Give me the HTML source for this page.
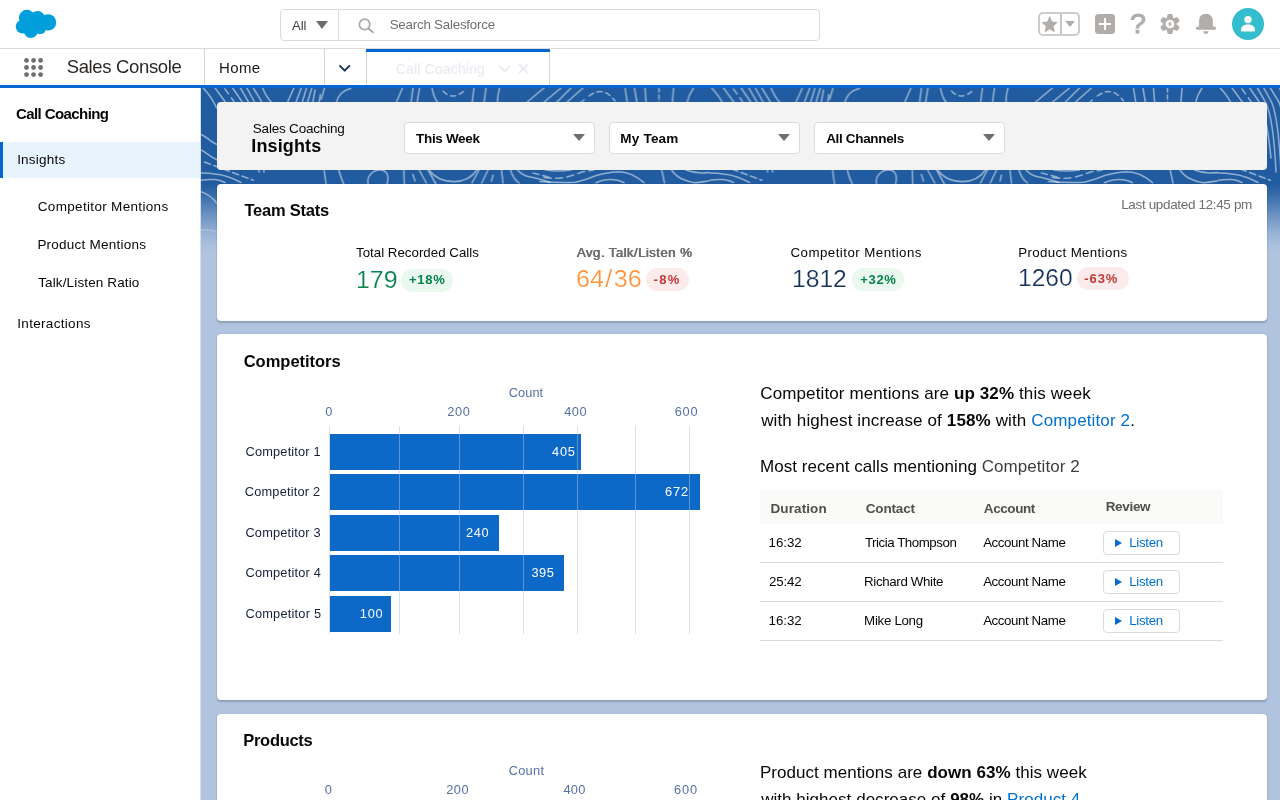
<!DOCTYPE html>
<html lang="en">
<head>
<meta charset="utf-8">
<title>Sales Console - Call Coaching Insights</title>
<style>
*{box-sizing:border-box;margin:0;padding:0}
html,body{width:1280px;height:800px;overflow:hidden;background:#fff}
body{font-family:"Liberation Sans",sans-serif;font-size:13px;color:#080707;position:relative}
.t{position:absolute;white-space:nowrap;line-height:1;display:block}
a{color:#0070d2;text-decoration:none}
svg{position:absolute;overflow:visible}
#app{position:absolute;left:0;top:0;width:1280px;height:800px;overflow:hidden;will-change:transform}

/* ---------- global header ---------- */
#hdr{position:absolute;left:0;top:0;width:1280px;height:49px;background:#fff;border-bottom:1px solid #dddbda}
#search{position:absolute;left:280px;top:9px;width:540px;height:32px;border:1px solid #dddbda;border-radius:4px;background:#fff}
#search .dv{position:absolute;left:57px;top:0;width:1px;height:30px;background:#dddbda}
.tri{position:absolute;width:0;height:0;border-style:solid;border-color:transparent}
#fav{position:absolute;left:1038px;top:12px;width:42px;height:24px;border:2px solid #cecbc9;border-radius:5px}
#fav .dv{position:absolute;left:20px;top:0;width:2px;height:20px;background:#c8c5c3}
#plus{position:absolute;left:1095px;top:14px;width:20px;height:19.5px;border-radius:3.5px;background:#b0adab}
#plus:before{content:"";position:absolute;left:4px;top:8.5px;width:12px;height:2.6px;background:#fff}
#plus:after{content:"";position:absolute;left:8.7px;top:3.8px;width:2.6px;height:12px;background:#fff}
#avatar{position:absolute;left:1232px;top:8px;width:32px;height:32px;border-radius:50%;background:#34becd}

/* ---------- nav ---------- */
#nav{position:absolute;left:0;top:49px;width:1280px;height:36px;background:#fff}
#navline{position:absolute;left:0;top:85px;width:1280px;height:3px;background:#0466cf}
.vs{position:absolute;top:0;width:1px;height:36px;background:#d6d4d2}
#tabtop{position:absolute;left:366px;top:0;width:184px;height:3px;background:#0466cf}

/* ---------- sidebar ---------- */
#side{position:absolute;left:0;top:88px;width:201px;height:712px;background:#fff;border-right:1px solid #d8dde6}
#side .sel{position:absolute;left:0;top:54px;width:200px;height:36px;background:#e7f3fd;border-left:3px solid #0466cf}

/* ---------- main ---------- */
#main{position:absolute;left:201px;top:88px;width:1079px;height:712px;background:#b0c4df;overflow:hidden}
#band{position:absolute;left:0;top:0;width:1079px;height:164px;background:#215ca0}
#fade{position:absolute;left:0;top:96px;width:1079px;height:68px;background:linear-gradient(to bottom,rgba(176,196,223,0) 0,rgba(176,196,223,.2) 20%,rgba(176,196,223,.54) 47%,rgba(176,196,223,.86) 75%,rgba(176,196,223,.97) 94%,#b0c4df 100%)}
.card{position:absolute;left:16px;width:1049.6px;background:#fff;border-radius:4px;box-shadow:0 2px 2px rgba(0,0,0,.18),0 0 1px rgba(0,0,0,.3)}
#filt{background:#f3f3f3;box-shadow:none}
.dd{position:absolute;top:20px;width:191px;height:32px;background:#fff;border:1px solid #dddbda;border-radius:4px}
.pill{position:absolute;height:23px;border-radius:11.5px}
.pg{background:#eaf8ef}
.pr{background:#fbeceb}
.bar{position:absolute;left:112.5px;height:35.7px;background:#0d69c8}
.gl{position:absolute;top:92px;width:1px;height:208px;background:rgba(172,192,220,.5)}
.th{position:absolute;left:543.2px;top:156px;width:462.8px;height:34px;background:#fafaf9}
.rl{position:absolute;left:543.2px;width:462.8px;height:1px;background:#dddbda}
.btn{position:absolute;left:886.2px;width:76.8px;height:23.5px;border:1px solid #dddbda;border-radius:4px;background:#fff}
.btn:before{content:"";position:absolute;left:11px;top:6.5px;width:0;height:0;border-style:solid;border-color:transparent;border-width:4.6px 0 4.6px 7.3px;border-left-color:#066ad4}
.p16{position:absolute;left:544.2px;white-space:nowrap;font-size:17px;line-height:1}
.p16 b{font-weight:700}
</style>
</head>
<body>
<div id="app">

<!-- ================= GLOBAL HEADER ================= -->
<div id="hdr">
  <!-- salesforce cloud logo -->
  <svg style="left:14px;top:8px" width="44" height="32" viewBox="14 8 44 32">
    <g fill="#009edb">
      <circle cx="26.9" cy="17.8" r="8"/><circle cx="37.6" cy="18.4" r="7.4"/><circle cx="48" cy="22.4" r="8.2"/>
      <circle cx="22.6" cy="26.6" r="6.9"/><circle cx="30.8" cy="31" r="6.9"/><circle cx="40" cy="27.6" r="6.4"/>
      <circle cx="33" cy="24" r="7"/>
    </g>
  </svg>
  <div id="search">
    <div class="dv"></div>
  </div>
  <div class="tri" style="left:316.4px;top:21px;border-width:8.4px 6.2px 0 6.2px;border-top-color:#706e6b"></div>
  <!-- magnifier -->
  <svg style="left:357px;top:17px" width="18" height="17" viewBox="357 17 18 17">
    <circle cx="364.6" cy="24.4" r="5.2" fill="none" stroke="#aca8a4" stroke-width="1.7"/>
    <path d="M368.4 28.4 L373 32.2" stroke="#aca8a4" stroke-width="1.9" stroke-linecap="round"/>
  </svg>
  <span class="t" style="left:291.97px;top:19.00px;font-size:13px;color:#3e3e3c;letter-spacing:0.024px">All</span>
    <span class="t" style="left:389.70px;top:18.00px;font-size:13.3px;color:#706e6b;letter-spacing:-0.203px">Search Salesforce</span>
  <!-- favourites -->
  <div id="fav"><div class="dv"></div></div>
  <svg style="left:1041.3px;top:15.2px" width="17.4" height="18.6" viewBox="0 0 18 18" preserveAspectRatio="none">
    <path d="M9 0.8 L11.5 6.4 L17.4 7 L13 11 L14.3 17 L9 13.9 L3.7 17 L5 11 L0.6 7 L6.5 6.4 Z" fill="#b0adab"/>
  </svg>
  <div class="tri" style="left:1064.8px;top:21px;border-width:6.5px 5.2px 0 5.2px;border-top-color:#b0adab"></div>
  <div id="plus"></div>
  <span class="t" style="left:1130.4px;top:10px;font-size:27.5px;color:#b0adab;transform:scaleX(1.04);transform-origin:0 0;-webkit-text-stroke:1px #b0adab">?</span>
  <!-- setup gear -->
  <svg style="left:1159.4px;top:12.9px" width="22" height="22" viewBox="-11 -11 22 22">
    <g fill="#b0adab">
      <circle r="6.8"/>
      <path d="M-3.3 -6 L-2.45 -9.2 Q-2.3 -10 -1.5 -10 L1.5 -10 Q2.3 -10 2.45 -9.2 L3.3 -6 Z"/>
      <path d="M-3.3 -6 L-2.45 -9.2 Q-2.3 -10 -1.5 -10 L1.5 -10 Q2.3 -10 2.45 -9.2 L3.3 -6 Z" transform="rotate(60)"/>
      <path d="M-3.3 -6 L-2.45 -9.2 Q-2.3 -10 -1.5 -10 L1.5 -10 Q2.3 -10 2.45 -9.2 L3.3 -6 Z" transform="rotate(120)"/>
      <path d="M-3.3 -6 L-2.45 -9.2 Q-2.3 -10 -1.5 -10 L1.5 -10 Q2.3 -10 2.45 -9.2 L3.3 -6 Z" transform="rotate(180)"/>
      <path d="M-3.3 -6 L-2.45 -9.2 Q-2.3 -10 -1.5 -10 L1.5 -10 Q2.3 -10 2.45 -9.2 L3.3 -6 Z" transform="rotate(240)"/>
      <path d="M-3.3 -6 L-2.45 -9.2 Q-2.3 -10 -1.5 -10 L1.5 -10 Q2.3 -10 2.45 -9.2 L3.3 -6 Z" transform="rotate(300)"/>
    </g>
    <circle r="4.35" fill="#fff"/>
    <path d="M1.1 -3.4 L-2.3 0.6 L-0.3 0.6 L-1.1 3.4 L2.3 -0.6 L0.3 -0.6 Z" fill="#b0adab"/>
  </svg>
  <!-- bell -->
  <svg style="left:1195px;top:13px" width="22" height="22" viewBox="0 0 22 22">
    <path d="M10.95 0.7 C6.7 0.7 4.1 3.6 4.1 7.6 L4.1 12.5 C4.1 13.4 3.6 13.8 2.8 13.8 L2.3 13.8 C1.4 13.8 0.85 14.4 0.85 15.3 C0.85 16.2 1.45 16.8 2.3 16.8 L19.6 16.8 C20.45 16.8 21.05 16.2 21.05 15.3 C21.05 14.4 20.5 13.8 19.6 13.8 L19.1 13.8 C18.3 13.8 17.8 13.4 17.8 12.5 L17.8 7.6 C17.8 3.6 15.2 0.7 10.95 0.7 Z" fill="#b0adab"/>
    <path d="M8.3 18.3 L13.5 18.3 C13.3 19.9 12.3 20.9 10.9 20.9 C9.5 20.9 8.5 19.9 8.3 18.3 Z" fill="#b0adab"/>
  </svg>
  <!-- avatar -->
  <div id="avatar">
    <svg style="left:8px;top:7px" width="16" height="17" viewBox="0 0 16 17">
      <circle cx="8" cy="4.6" r="3.7" fill="#fff"/>
      <path d="M1 15.6 C1 11.4 3.6 9.6 8 9.6 C12.4 9.6 15 11.4 15 15.6 C15 16.3 14.6 16.6 14 16.6 L2 16.6 C1.4 16.6 1 16.3 1 15.6 Z" fill="#fff"/>
    </svg>
  </div>
</div>

<!-- ================= NAVIGATION BAR ================= -->
<div id="nav">
  <svg style="left:23px;top:8px" width="22" height="22" viewBox="23 57 22 22">
    <g fill="#706e6b">
      <circle cx="26.5" cy="60.4" r="2.4"/><circle cx="33.55" cy="60.4" r="2.4"/><circle cx="40.6" cy="60.4" r="2.4"/>
      <circle cx="26.5" cy="67.5" r="2.4"/><circle cx="33.55" cy="67.5" r="2.4"/><circle cx="40.6" cy="67.5" r="2.4"/>
      <circle cx="26.5" cy="74.6" r="2.4"/><circle cx="33.55" cy="74.6" r="2.4"/><circle cx="40.6" cy="74.6" r="2.4"/>
    </g>
  </svg>
  <div class="vs" style="left:204px"></div>
  <div class="vs" style="left:324px"></div>
  <div class="vs" style="left:366px"></div>
  <div class="vs" style="left:549px"></div>
  <div id="tabtop"></div>
  <span class="t" style="left:66.66px;top:9.00px;font-size:18.5px;color:#2b2826;letter-spacing:-0.344px">Sales Console</span>
    <span class="t" style="left:219.07px;top:11.00px;font-size:15px;color:#181818;letter-spacing:0.328px">Home</span>
    <span class="t" style="left:395.69px;top:13.00px;font-size:14px;color:#e7e9ef;letter-spacing:0.171px">Call Coaching</span>
  <svg style="left:338px;top:15px" width="14" height="9" viewBox="338 64 14 9">
    <path d="M340 65.9 L344.7 70.7 L349.4 65.9" fill="none" stroke="#16325c" stroke-width="1.9" stroke-linecap="round" stroke-linejoin="round"/>
  </svg>
  <svg style="left:498px;top:15px" width="32" height="10" viewBox="498 64 32 10">
    <path d="M499.6 66.2 L504.7 71.4 L509.8 66.2" fill="none" stroke="#e6e9ef" stroke-width="1.5" stroke-linecap="round" stroke-linejoin="round"/>
    <path d="M519.4 64.6 L527.6 72.8 M527.6 64.6 L519.4 72.8" fill="none" stroke="#e6e9ef" stroke-width="1.5" stroke-linecap="round"/>
  </svg>
</div>
<div id="navline"></div>

<!-- ================= SIDEBAR ================= -->
<div id="side">
  <div class="sel"></div>
  <span class="t" style="left:15.98px;top:18.00px;font-size:15px;color:#080707;font-weight:700;letter-spacing:-0.583px">Call Coaching</span>
    <span class="t" style="left:17.15px;top:65.00px;font-size:13.5px;color:#080707;letter-spacing:0.230px">Insights</span>
    <span class="t" style="left:37.81px;top:112.00px;font-size:13.5px;color:#080707;letter-spacing:0.323px">Competitor Mentions</span>
    <span class="t" style="left:37.39px;top:150.00px;font-size:13.5px;color:#080707;letter-spacing:0.243px">Product Mentions</span>
    <span class="t" style="left:38.20px;top:188.00px;font-size:13.5px;color:#080707;letter-spacing:0.133px">Talk/Listen Ratio</span>
    <span class="t" style="left:17.25px;top:229.00px;font-size:13.5px;color:#080707;letter-spacing:0.313px">Interactions</span>
</div>

<!-- ================= MAIN CONTENT ================= -->
<div id="main">
  <div id="band">
    <svg style="left:0;top:0" width="1079" height="164" viewBox="0 0 1079 164">
      <defs>
        <pattern id="topo" x="0" y="0" width="508.5" height="164" patternUnits="userSpaceOnUse">
          <g fill="none" stroke="#fff" stroke-opacity=".5" stroke-width="1.55" stroke-linecap="round">
            <!-- top strip: back-slash group (continues steeply downward, seen again in right-hand gutter) -->
            <path d="M2.2 0 C7 5 12 12 15.5 19.8 M14.1 0 L24.3 14 C30 22 36 40 40 60 M31.7 0 L41.2 14 C46 22 50 40 53 70 M39.4 0 L47.5 14 C52 23 56 42 58 84 M45.8 0 L53.5 14 C58 24 61 44 63 84 M52.4 0 L60.9 14 C65 24 68 46 69 80 M61.6 0 C64 6 67 11 71 15"/>
            <path d="M24 1 L33 13.5" stroke-dasharray="6 5"/>
            <!-- forward-slash group and arc -->
            <path d="M92.9 0 L86.6 14 M100.3 0 L95 14 M105.5 0 L101.3 14 M110.8 0 L106.6 14 M114 2 L111.9 14 M119.3 6.5 L118.2 14 M123.5 0 L120.3 11 M149.8 0.5 C142 2 137 8 135 15"/>
            <path d="M201.5 0 L195 15 M212 0 L210 15 M218.5 0 L216 15 M231 0 C232 6 234 11 237 15"/>
            <path d="M242 3 Q252 14 265 1" stroke-dasharray="5 4"/>
            <path d="M273 0 L271 15 M285 0 L283 15 M298.5 0 C297 5 296.5 10 296.4 15"/>
            <path d="M343 0 L325 15 M360 0 L342 15 M370 0 L355 15 M382 0 L365 15 M383 12 L379 15"/>
            <path d="M388 8 Q402 -3 414 13" stroke-dasharray="5 4"/>
            <path d="M424 0 L426.4 15 M433.5 0 L436 15 M444 0 L445.2 15 M472.6 0 L471.3 15 M492.5 0 C489 5 487 10 486 15"/>
            <path d="M458 0 L458 15" stroke-dasharray="4 3"/>
            <!-- left gutter waves -->
            <path d="M0 46.4 C5 48 9 54 16 56.5 L26 58.5 M0 62 C5 64 9 69 16 71.7 L26 73.5"/>
            <path d="M3.4 74 L52.4 92.2" stroke-dasharray="6.5 3.5"/>
            <path d="M-1 103.5 C5 105 11 109 16 115.5 M-1 142.5 C5 141.5 11 142 16 144"/>
            <!-- middle strip (v = 82..95) -->
            <path d="M0 85 C8 85 14 86 18 86.6 C26 88 33 91 40 94.5 M0 92.2 C5 91.5 10 91.3 14 91.6 C18 92 21 93 24 94.5"/>
            <path d="M122.8 80 L125 96 M137.5 80 C138.5 86 140.5 91 142.8 96 M167 96 C165.5 88 172 82 179 82 C186 82 188.5 88 186 96 M202.8 80 L203.3 96 M211.9 86.5 L214 92.9"/>
            <path d="M218.2 82 L225.3 95 M228 82 C234 90 243 93.6 253.4 93.6 C264 93.6 271 89 276 82 M226 80 L236 98 M278 82 L271 95 M287 82 L280.8 95 M292 87.3 L290.6 93 M300.5 82 L302 95"/>
            <path d="M309.6 82 C311 88 314 92 318 95 M316.7 82 C320 86 324 88 328 88.7 C336 90 342 92 349 94.3"/>
            <path d="M332 85 L349 89.4" stroke-dasharray="6 4"/>
            <path d="M343 89.4 C350 90.4 355 90.4 360 90 C366 89.4 372 87.6 377 85.4 C382 83.6 387 82.6 392.4 82.3" stroke-dasharray="7 4.5"/>
            <path d="M344.6 82 C352 83.2 362 83.2 370 82 M339 93.6 C352 94.6 364 94.6 374 94.3 C386 92 394 87 402.3 85.8 C408 84.5 412 83.7 417.8 83.7 C424 84 428 85.6 430.4 86.5 C436 89 440 92 443 94.7 M395 94.7 C400 92.6 405 91.5 409 91.5 C414 91.5 419 92.6 423 94.7"/>
            <path d="M460.7 82 L463.5 95 M470.5 82 C474 87 478 90 482.5 91.5 C487 93.6 490 94.3 493.7 94.7 C498 94.6 503 93.5 507.8 92.9 M485 82 C490 84 496 85 500.7 85 C504 85 507 84.6 510 84.4"/>
          </g>
        </pattern>
      </defs>
      <rect x="0" y="0" width="1079" height="164" fill="url(#topo)"/>
    </svg>
    <div id="fade"></div>
  </div>

  <!-- ---- filter panel ---- -->
  <div class="card" id="filt" style="top:14px;height:67.5px">
    <div class="dd" style="left:187px"><div class="tri" style="left:168.1px;top:11px;border-width:7.9px 6px 0 6px;border-top-color:#706e6b"></div></div>
    <div class="dd" style="left:392px"><div class="tri" style="left:168.1px;top:11px;border-width:7.9px 6px 0 6px;border-top-color:#706e6b"></div></div>
    <div class="dd" style="left:597px"><div class="tri" style="left:168.1px;top:11px;border-width:7.9px 6px 0 6px;border-top-color:#706e6b"></div></div>
    <span class="t" style="left:35.79px;top:20.00px;font-size:13.5px;color:#080707;letter-spacing:-0.198px">Sales Coaching</span>
    <span class="t" style="left:34.30px;top:35.00px;font-size:18px;color:#080707;font-weight:700;letter-spacing:0.134px">Insights</span>
    <span class="t" style="left:199.10px;top:30.00px;font-size:13.5px;color:#080707;font-weight:700;letter-spacing:-0.329px">This Week</span>
    <span class="t" style="left:403.35px;top:30.00px;font-size:13.5px;color:#080707;font-weight:700;letter-spacing:0.204px">My Team</span>
    <span class="t" style="left:609.16px;top:30.00px;font-size:13.5px;color:#080707;font-weight:700;letter-spacing:-0.334px">All Channels</span>
  </div>

  <!-- ---- team stats ---- -->
  <div class="card" id="team" style="top:95.5px;height:137px">
    <div class="pill pg" style="left:184px;top:85.5px;width:52px"></div>
    <div class="pill pr" style="left:429px;top:84.5px;width:43px"></div>
    <div class="pill pg" style="left:635.2px;top:84.5px;width:51.6px"></div>
    <div class="pill pr" style="left:860px;top:83.5px;width:51.7px"></div>
    <span class="t" style="left:27.41px;top:18.50px;font-size:16.5px;color:#080707;font-weight:700;letter-spacing:-0.216px">Team Stats</span>
    <span class="t" style="left:904.19px;top:14.50px;font-size:13.5px;color:#706e6b;letter-spacing:-0.350px">Last updated 12:45 pm</span>
    <span class="t" style="left:139.00px;top:62.50px;font-size:13.3px;color:#080707;letter-spacing:0.010px">Total Recorded Calls</span>
    <span class="t" style="left:138.80px;top:85.50px;font-size:23px;color:#04844b;transform:scaleX(1.083);transform-origin:0 0;-webkit-text-stroke:.2px #fff">179</span>
    <span class="t" style="left:192.05px;top:89.50px;font-size:13px;color:#04844b;font-weight:700;letter-spacing:0.726px">+18%</span>
    <span class="t" style="left:359.77px;top:62.50px;font-size:13.3px;color:#6b6b6b;letter-spacing:0.400px;text-shadow:.5px 0 0 #6b6b6b,-.25px 0 0 rgba(107,107,107,.6)">Avg. Talk/Listen %</span>
    <span class="t" style="left:359.43px;top:84.50px;font-size:23px;color:#fe9339;transform:scaleX(1.090);transform-origin:0 0;-webkit-text-stroke:.2px #fff">64<span style="margin:0 1.3px">/</span>36</span>
    <span class="t" style="left:436.49px;top:89.50px;font-size:13px;color:#c23934;font-weight:700;letter-spacing:1.366px">-8%</span>
    <span class="t" style="left:573.52px;top:62.50px;font-size:13.3px;color:#080707;letter-spacing:0.460px">Competitor Mentions</span>
    <span class="t" style="left:575.12px;top:84.50px;font-size:23px;color:#16325c;transform:scaleX(1.071);transform-origin:0 0;-webkit-text-stroke:.2px #fff">1812</span>
    <span class="t" style="left:643.25px;top:89.50px;font-size:13px;color:#04844b;font-weight:700;letter-spacing:0.659px">+32%</span>
    <span class="t" style="left:801.31px;top:62.50px;font-size:13.3px;color:#080707;letter-spacing:0.353px">Product Mentions</span>
    <span class="t" style="left:801.13px;top:83.50px;font-size:23px;color:#16325c;transform:scaleX(1.066);transform-origin:0 0;-webkit-text-stroke:.2px #fff">1260</span>
    <span class="t" style="left:867.29px;top:88.50px;font-size:13px;color:#c23934;font-weight:700;letter-spacing:0.901px">-63%</span>
  </div>

  <!-- ---- competitors ---- -->
  <div class="card" id="comp" style="top:246px;height:365.5px">
    <div class="bar" style="top:100px;width:251.5px"></div>
    <div class="bar" style="top:140.4px;width:370.5px"></div>
    <div class="bar" style="top:181.1px;width:169.5px"></div>
    <div class="bar" style="top:221.2px;width:234.5px"></div>
    <div class="bar" style="top:262px;width:61.5px"></div>
    <div class="gl" style="left:112px"></div><div class="gl" style="left:182px"></div><div class="gl" style="left:242px"></div>
    <div class="gl" style="left:306px"></div><div class="gl" style="left:360px"></div><div class="gl" style="left:418px"></div><div class="gl" style="left:472px"></div>
    <div class="th"></div>
    <div class="rl" style="top:228px"></div><div class="rl" style="top:267px"></div><div class="rl" style="top:306px"></div>
    <div class="btn" style="top:197.2px"></div><div class="btn" style="top:236.3px"></div><div class="btn" style="top:275.3px"></div>
    <p class="p16" id="q1" style="left:543.3px;top:51px;letter-spacing:.115px">Competitor mentions are <b>up 32%</b> this week</p>
    <p class="p16" id="q2" style="left:544.2px;top:78px;letter-spacing:.13px">with highest increase of <b>158%</b> with <a>Competitor 2</a>.</p>
    <p class="p16" id="q3" style="left:543px;top:124px;letter-spacing:.055px">Most recent calls mentioning <span style="color:#3e3e3c">Competitor 2</span></p>
    <span class="t" style="left:26.72px;top:19.00px;font-size:16.5px;color:#080707;font-weight:700;letter-spacing:-0.022px">Competitors</span>
    <span class="t" style="left:291.85px;top:53.00px;font-size:12.8px;color:#5670a6;letter-spacing:0.024px">Count</span>
    <span class="t" style="left:108.30px;top:72.00px;font-size:12.8px;color:#5670a6">0</span>
    <span class="t" style="left:230.16px;top:72.00px;font-size:12.8px;color:#5670a6;letter-spacing:0.646px">200</span>
    <span class="t" style="left:347.21px;top:72.00px;font-size:12.8px;color:#5670a6;letter-spacing:0.471px">400</span>
    <span class="t" style="left:457.65px;top:72.00px;font-size:12.8px;color:#5670a6;letter-spacing:0.799px">600</span>
    <span class="t" style="left:28.60px;top:112.00px;font-size:12.8px;color:#16203a;letter-spacing:0.161px">Competitor 1</span>
    <span class="t" style="left:27.75px;top:152.00px;font-size:12.8px;color:#16203a;letter-spacing:0.194px">Competitor 2</span>
    <span class="t" style="left:28.45px;top:193.00px;font-size:12.8px;color:#16203a;letter-spacing:0.169px">Competitor 3</span>
    <span class="t" style="left:28.45px;top:233.00px;font-size:12.8px;color:#16203a;letter-spacing:0.197px">Competitor 4</span>
    <span class="t" style="left:28.45px;top:274.00px;font-size:12.8px;color:#16203a;letter-spacing:0.212px">Competitor 5</span>
    <span class="t" style="left:335.11px;top:112.00px;font-size:12.8px;color:#fff;letter-spacing:0.690px">405</span>
    <span class="t" style="left:448.05px;top:152.00px;font-size:12.8px;color:#fff;letter-spacing:0.871px">672</span>
    <span class="t" style="left:249.06px;top:193.00px;font-size:12.8px;color:#fff;letter-spacing:0.596px">240</span>
    <span class="t" style="left:314.41px;top:233.00px;font-size:12.8px;color:#fff;letter-spacing:0.537px">395</span>
    <span class="t" style="left:142.82px;top:274.00px;font-size:12.8px;color:#fff;letter-spacing:0.712px">100</span>
    <span class="t" style="left:553.40px;top:168.00px;font-size:13.5px;color:#514f4d;font-weight:700;letter-spacing:0.121px">Duration</span>
    <span class="t" style="left:648.75px;top:168.00px;font-size:13.5px;color:#514f4d;font-weight:700;letter-spacing:-0.172px">Contact</span>
    <span class="t" style="left:766.86px;top:168.00px;font-size:13.5px;color:#514f4d;font-weight:700;letter-spacing:-0.417px">Account</span>
    <span class="t" style="left:888.70px;top:166.00px;font-size:13.5px;color:#514f4d;font-weight:700;letter-spacing:-0.330px">Review</span>
    <span class="t" style="left:551.59px;top:202.00px;font-size:13.3px;color:#080707;letter-spacing:-0.048px">16:32</span>
    <span class="t" style="left:647.90px;top:202.00px;font-size:13.3px;color:#080707;letter-spacing:-0.454px">Tricia Thompson</span>
    <span class="t" style="left:766.17px;top:202.00px;font-size:13.3px;color:#080707;letter-spacing:-0.417px">Account Name</span>
    <span class="t" style="left:912.31px;top:202.00px;font-size:13.3px;color:#0070d2;letter-spacing:-0.325px">Listen</span>
    <span class="t" style="left:551.93px;top:241.00px;font-size:13.3px;color:#080707;letter-spacing:-0.134px">25:42</span>
    <span class="t" style="left:647.11px;top:241.00px;font-size:13.3px;color:#080707;letter-spacing:-0.352px">Richard White</span>
    <span class="t" style="left:766.17px;top:241.00px;font-size:13.3px;color:#080707;letter-spacing:-0.417px">Account Name</span>
    <span class="t" style="left:912.31px;top:241.00px;font-size:13.3px;color:#0070d2;letter-spacing:-0.325px">Listen</span>
    <span class="t" style="left:551.59px;top:280.00px;font-size:13.3px;color:#080707;letter-spacing:-0.048px">16:32</span>
    <span class="t" style="left:647.11px;top:280.00px;font-size:13.3px;color:#080707;letter-spacing:-0.300px">Mike Long</span>
    <span class="t" style="left:766.17px;top:280.00px;font-size:13.3px;color:#080707;letter-spacing:-0.417px">Account Name</span>
    <span class="t" style="left:912.31px;top:280.00px;font-size:13.3px;color:#0070d2;letter-spacing:-0.325px">Listen</span>
  </div>

  <!-- ---- products ---- -->
  <div class="card" id="prod" style="top:625.5px;height:365px">
    <p class="p16" id="q4" style="left:542.9px;top:50.5px;letter-spacing:.045px">Product mentions are <b>down 63%</b> this week</p>
    <p class="p16" id="q5" style="left:544.2px;top:77.5px;letter-spacing:.035px">with highest decrease of <b>98%</b> in <a>Product 4</a>.</p>
    <span class="t" style="left:26.30px;top:18.50px;font-size:16.5px;color:#080707;font-weight:700;letter-spacing:-0.304px">Products</span>
    <span class="t" style="left:291.65px;top:51.50px;font-size:12.8px;color:#5670a6;letter-spacing:0.299px">Count</span>
    <span class="t" style="left:107.80px;top:70.50px;font-size:12.8px;color:#5670a6">0</span>
    <span class="t" style="left:229.16px;top:70.50px;font-size:12.8px;color:#5670a6;letter-spacing:0.496px">200</span>
    <span class="t" style="left:346.41px;top:70.50px;font-size:12.8px;color:#5670a6;letter-spacing:0.271px">400</span>
    <span class="t" style="left:457.05px;top:70.50px;font-size:12.8px;color:#5670a6;letter-spacing:0.849px">600</span>
  </div>
</div>
</div>

</body>
</html>
